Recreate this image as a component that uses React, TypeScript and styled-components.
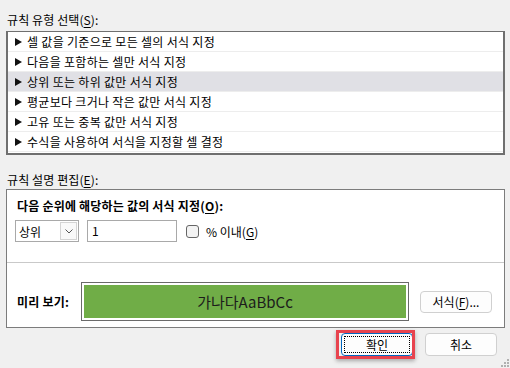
import styled, { createGlobalStyle } from 'styled-components';

const GlobalStyle = createGlobalStyle`
  html, body {
    margin: 0;
    padding: 0;
    background: #f0f0f0;
  }
  body {
    font-family: 'Noto Sans CJK KR', 'Noto Sans', sans-serif;
    font-size: 12px;
    color: #000;
  }
`;

const Dialog = styled.div`
  position: relative;
  width: 510px;
  height: 368px;
  box-sizing: border-box;
  padding: 0 5px 0 6px;
  display: flex;
  flex-direction: column;
  background: #f0f0f0;
`;

const SectionLabel = styled.div<{ $top: number }>`
  margin-top: ${(p) => p.$top}px;
  padding-left: 1px;
  height: 16px;
  line-height: 16px;
  letter-spacing: 0.1px;
`;

const Key = styled.span`
  text-decoration: underline;
  text-underline-offset: 2px;
`;

const RuleList = styled.div`
  margin-top: 3px;
  border: 2px solid #6f6f6f;
  border-top-width: 1px;
  background: #fff;
  padding-bottom: 1px;
`;

const RuleRow = styled.div<{ $selected?: boolean }>`
  height: 20px;
  box-sizing: border-box;
  display: flex;
  align-items: center;
  gap: 5px;
  padding-left: 7px;
  border-bottom: 1px solid #ededed;
  background: ${(p) => (p.$selected ? '#e0e0e5' : '#fff')};
  line-height: 16px;
  letter-spacing: 0.3px;
`;

const Arrow = () => (
  <svg width="7" height="8" viewBox="0 0 7 8">
    <polygon points="0,0 7,4 0,8" fill="#111" />
  </svg>
);

const RuleBox = styled.div`
  margin-top: 1px;
  border: 1px solid #7c7c7c;
  background: #fff;
  height: 139px;
  box-sizing: border-box;
  display: flex;
  flex-direction: column;
`;

const UpperPart = styled.div`
  height: 73px;
  box-sizing: border-box;
  padding: 8px 9px 0;
  border-bottom: 1px solid #c9c9c9;
`;

const BoldTitle = styled.div`
  font-weight: 700;
  line-height: 16px;
  padding-left: 1px;
  letter-spacing: 0.2px;
`;

const Controls = styled.div`
  margin-top: 6px;
  display: flex;
  align-items: center;
  height: 22px;
`;

const Combo = styled.div`
  width: 64px;
  height: 22px;
  box-sizing: border-box;
  margin-left: -1px;
  border: 1px solid #a9a9a9;
  display: flex;
  align-items: center;
  padding-left: 3px;
  background: #fff;
`;

const ComboButton = styled.div`
  margin-left: auto;
  margin-right: 1px;
  width: 17px;
  height: 18px;
  box-sizing: border-box;
  border: 1px solid #d4d4d4;
  background: #f9f9f9;
  display: flex;
  align-items: center;
  justify-content: center;
`;

const TextInput = styled.div`
  margin-left: 8px;
  width: 90px;
  height: 22px;
  box-sizing: border-box;
  border: 1px solid #a9a9a9;
  padding-left: 4px;
  line-height: 20px;
`;

const CheckBox = styled.div`
  margin-left: 9px;
  width: 13px;
  height: 13px;
  box-sizing: border-box;
  border: 1px solid #666;
  border-radius: 3px;
  background: #f3f3f3;
`;

const CheckLabel = styled.span`
  margin-left: 7px;
`;

const LowerPart = styled.div`
  flex: 1;
  display: flex;
  align-items: center;
  padding: 19px 12px 6px 9px;
  box-sizing: border-box;
`;

const PreviewLabel = styled.div`
  width: 65px;
  font-weight: 700;
  padding-left: 1px;
  box-sizing: border-box;
  letter-spacing: 0.2px;
`;

const PreviewFrame = styled.div`
  flex: 1;
  height: 39px;
  box-sizing: border-box;
  border: 1px solid #6a6a6a;
  padding: 2px;
  background: #fff;
`;

const PreviewFill = styled.div`
  height: 100%;
  background: #70ad47;
  display: flex;
  align-items: center;
  justify-content: center;
  font-size: 15px;
  color: #1c1c1c;
`;

const Button = styled.button<{ $primary?: boolean }>`
  position: relative;
  width: 72px;
  height: 23px;
  box-sizing: border-box;
  border-radius: 4px;
  border: 1px solid ${(p) => (p.$primary ? '#0067c0' : '#d0d0d0')};
  background: #fdfdfd;
  font-family: inherit;
  font-size: 12px;
  color: #000;
  padding: 0;
  line-height: 20px;

  ${(p) =>
    p.$primary &&
    `
    &::after {
      content: '';
      position: absolute;
      inset: 2px;
      border: 1px dotted #000;
    }
  `}
`;

const FormatButton = styled(Button)`
  margin-left: 11px;
  height: 22px;
`;

const ButtonRow = styled.div`
  margin-top: 5px;
  display: flex;
  justify-content: flex-end;
  gap: 12px;
  padding-right: 8px;
`;

const Highlighted = styled.div`
  position: relative;
  display: flex;
`;

const RedFrame = styled.div`
  position: absolute;
  left: -5px;
  top: -3px;
  width: 79px;
  height: 29px;
  box-sizing: border-box;
  border: 3px solid #e8434e;
  box-shadow: 0 2px 4px rgba(0, 0, 0, 0.3);
  pointer-events: none;
`;

const Grip = styled.svg`
  position: absolute;
  right: 1px;
  bottom: 1px;
`;

const rules = [
  '셀 값을 기준으로 모든 셀의 서식 지정',
  '다음을 포함하는 셀만 서식 지정',
  '상위 또는 하위 값만 서식 지정',
  '평균보다 크거나 작은 값만 서식 지정',
  '고유 또는 중복 값만 서식 지정',
  '수식을 사용하여 서식을 지정할 셀 결정',
];

const App = () => {
  const selected = 2;

  return (
    <Dialog>
      <GlobalStyle />
      <SectionLabel $top={12}>
        규칙 유형 선택(<Key>S</Key>):
      </SectionLabel>
      <RuleList>
        {rules.map((rule, i) => (
          <RuleRow key={rule} $selected={i === selected}>
            <Arrow />
            {rule}
          </RuleRow>
        ))}
      </RuleList>

      <SectionLabel $top={17}>
        규칙 설명 편집(<Key>E</Key>):
      </SectionLabel>
      <RuleBox>
        <UpperPart>
          <BoldTitle>
            다음 순위에 해당하는 값의 서식 지정(<Key>O</Key>):
          </BoldTitle>
          <Controls>
            <Combo>
              상위
              <ComboButton>
                <svg width="8" height="5" viewBox="0 0 8 5">
                  <polyline points="0.5,0.5 4,4 7.5,0.5" fill="none" stroke="#555" strokeWidth="1" />
                </svg>
              </ComboButton>
            </Combo>
            <TextInput>1</TextInput>
            <CheckBox />
            <CheckLabel>
              % 이내(<Key>G</Key>)
            </CheckLabel>
          </Controls>
        </UpperPart>
        <LowerPart>
          <PreviewLabel>미리 보기:</PreviewLabel>
          <PreviewFrame>
            <PreviewFill>가나다AaBbCc</PreviewFill>
          </PreviewFrame>
          <FormatButton>
            서식(<Key>F</Key>)...
          </FormatButton>
        </LowerPart>
      </RuleBox>

      <ButtonRow>
        <Highlighted>
          <Button $primary>확인</Button>
          <RedFrame />
        </Highlighted>
        <Button>취소</Button>
      </ButtonRow>

      <Grip width="8" height="8" viewBox="0 0 8 8">
        <rect x="6" y="0" width="2" height="2" fill="#b0b0b0" />
        <rect x="3" y="3" width="2" height="2" fill="#b0b0b0" />
        <rect x="6" y="3" width="2" height="2" fill="#b0b0b0" />
        <rect x="0" y="6" width="2" height="2" fill="#b0b0b0" />
        <rect x="3" y="6" width="2" height="2" fill="#b0b0b0" />
        <rect x="6" y="6" width="2" height="2" fill="#b0b0b0" />
      </Grip>
    </Dialog>
  );
};

export default App;
